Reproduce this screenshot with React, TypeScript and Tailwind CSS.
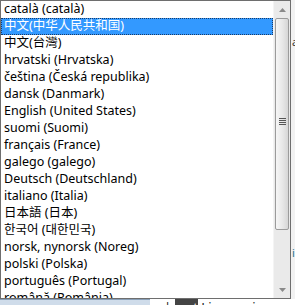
import React from 'react';

const languages = [
    'català (català)',
    '中文(中华人民共和国)',
    '中文(台灣)',
    'hrvatski (Hrvatska)',
    'čeština (Česká republika)',
    'dansk (Danmark)',
    'English (United States)',
    'suomi (Suomi)',
    'français (France)',
    'galego (galego)',
    'Deutsch (Deutschland)',
    'italiano (Italia)',
    '日本語 (日本)',
    '한국어 (대한민국)',
    'norsk, nynorsk (Noreg)',
    'polski (Polska)',
    'português (Portugal)',
    'română (România)',
];

const selectedIndex = 1;

const ScrollBar: React.FC = () => (
    <div className="w-[17px] h-full flex flex-col bg-[#eaeaea] border-l border-[#f4f4f4]">
        <div className="h-[17px] flex items-center justify-center shrink-0">
            <svg width="7" height="4" viewBox="0 0 7 4">
                <path d="M0 4 L3.5 0 L7 4 Z" fill="#8a8a8a" />
            </svg>
        </div>
        <div className="h-[212px] mx-[1px] rounded-[2px] border border-[#9b9b9b] bg-gradient-to-r from-[#f6f6f6] via-[#e9e9e9] to-[#d6d6d6] flex items-center justify-center shrink-0">
            <div className="flex flex-col gap-[1px] mt-[-6px]">
                <div className="w-[7px] h-[1px] bg-[#555]" />
                <div className="w-[7px] h-[1px] bg-[#555]" />
                <div className="w-[7px] h-[1px] bg-[#555]" />
                <div className="w-[7px] h-[1px] bg-[#555]" />
            </div>
        </div>
        <div className="flex-1" />
        <div className="h-[17px] flex items-center justify-center shrink-0">
            <svg width="7" height="4" viewBox="0 0 7 4">
                <path d="M0 0 L3.5 4 L7 0 Z" fill="#8a8a8a" />
            </svg>
        </div>
    </div>
);

export default function App() {
    return (
        <div
            className="w-[295px] h-[305px] overflow-hidden flex flex-col bg-white"
            style={{ fontFamily: '"Noto Sans", "Noto Sans CJK SC", sans-serif' }}
        >
            <div className="flex h-[299px] shrink-0">
                <div className="w-[291px] h-[299px] border border-[#6e6e6e] flex bg-white">
                    <div className="flex-1 overflow-hidden">
                        {languages.map((lang, i) => (
                            <div
                                key={lang}
                                className={
                                    i === selectedIndex
                                        ? 'h-[17px] pl-[3px] flex items-center text-[12.5px] leading-none whitespace-nowrap text-white bg-[#3399ff] outline-1 outline-dotted outline-[#1b3b66] -outline-offset-1'
                                        : 'h-[17px] pl-[3px] flex items-center text-[12.5px] leading-none whitespace-nowrap text-black'
                                }
                            >
                                {lang}
                            </div>
                        ))}
                    </div>
                    <ScrollBar />
                </div>
                <div className="flex-1 flex flex-col bg-[#f2f2f2] text-[11px] leading-none overflow-hidden">
                    <div className="h-[36px]" />
                    <span className="text-[#333] pl-[1px]">a</span>
                    <div className="h-[200px]" />
                    <span className="text-[#2a6f8a] pl-[1px]">i</span>
                </div>
            </div>
            <div className="flex-1 flex overflow-hidden">
                <div className="w-[150px] bg-[#cfdcea] border-t border-[#8aa0b8]" />
                <div className="flex-1 bg-white text-[13px] leading-[14px] text-[#222] whitespace-nowrap pt-[1px]">
                    a&nbsp;&nbsp;| <span className="bg-[#444] text-white">rect</span> Livepreview
                </div>
            </div>
        </div>
    );
}
